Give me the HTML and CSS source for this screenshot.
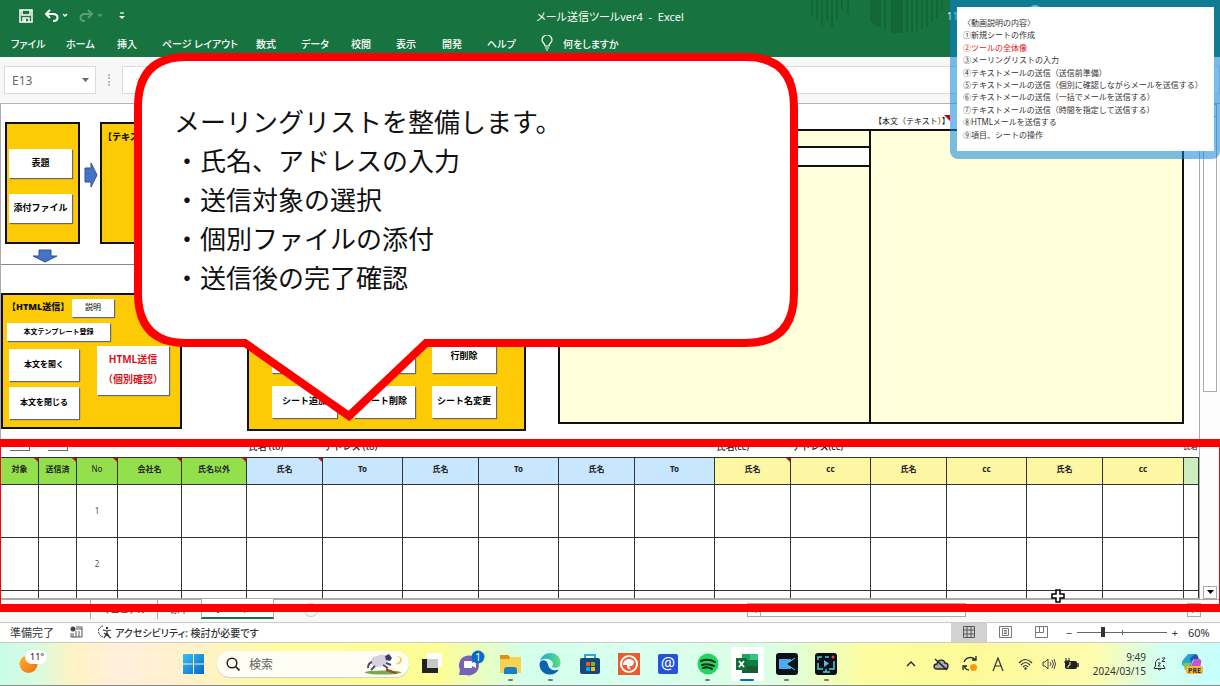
FILE: index.html
```html
<!DOCTYPE html>
<html lang="ja">
<head>
<meta charset="utf-8">
<title>メール送信ツールver4 - Excel</title>
<link rel="stylesheet" href="styles.css">
</head>
<body>
<div class="screen">
  <header class="ribbon">
    <svg class="ribbon-art" viewBox="0 0 140 36" aria-hidden="true">
      <path d="M2 0v15M7 0v19M12 0v26M17 0v22M22 0v28M27 0v19M32 0v10M38 0v15" stroke-width="2"/>
      <path d="M60 0h11v28l-11-7zM81 0h12v33h-12z" class="solid"/>
      <path d="M75 0v30M97 0v33M102 0v32M107 0v31M112 0v28M117 0v26M122 0v22M127 0v18M132 0v10" stroke-width="2"/>
    </svg>
    <div class="titlebar">
      <div class="quick">
        <button aria-label="上書き保存"><svg width="14" height="14" viewBox="0 0 14 14"><path d="M1 1h12v12H1zM3 1v5h8V1M4 13V9h6v4" fill="none" stroke="#fff" stroke-width="1.500"/><path d="M5 10h2v3H5z" fill="#fff"/></svg></button>
        <button aria-label="元に戻す"><svg width="24" height="14" viewBox="0 0 24 14"><path d="M6 1 2 5l4 4M2 5h7c6 0 6 7 0 7" fill="none" stroke="#fff" stroke-width="2"/><path d="m19 5 2 2 2-2" fill="none" stroke="#fff" stroke-width="1.5"/></svg></button>
        <button class="dim" aria-label="やり直し"><svg width="24" height="14" viewBox="0 0 24 14"><path d="m9 1 4 4-4 4M13 5H6c-6 0-6 7 0 7" fill="none" stroke="#fff" stroke-width="2"/><path d="m19 5 2 2 2-2" fill="none" stroke="#fff" stroke-width="1.5"/></svg></button>
        <button aria-label="ユーザー設定"><svg width="8" height="10" viewBox="0 0 8 10"><path d="M2 2h4" stroke="#fff" stroke-width="1.200"/><path d="M1 5h6L4 8z" fill="#fff"/></svg></button>
      </div>
      <div class="doc-title">メール送信ツールver4&nbsp; -&nbsp; Excel</div>
      <div class="user">11<i class="avatar"></i></div>
    </div>
    <nav class="tabs">
      <button>ファイル</button><button>ホーム</button><button>挿入</button><button>ページ レイアウト</button><button>数式</button><button>データ</button><button>校閲</button><button>表示</button><button>開発</button><button>ヘルプ</button>
      <svg width="12" height="16" viewBox="0 0 12 16" aria-hidden="true"><path d="M4 11c0-3-3-3-3-6a5 5 0 0 1 10 0c0 3-3 3-3 6zM4 13h4M5 15h2" fill="none" stroke="#fff" stroke-width="1.2"/></svg>
      <button>何をしますか</button>
    </nav>
  </header>

  <div class="formula-bar">
    <div class="namebox"><input aria-label="名前ボックス" value="E13"><svg width="7" height="5" viewBox="0 0 7 5" aria-hidden="true"><path d="M0 0h7L3.500 4z" fill="#666"/></svg></div>
    <span class="grip" aria-hidden="true"></span>
    <div class="fx"><span aria-hidden="true">×</span><input aria-label="数式バー"></div>
  </div>

  <main class="workbook">
    <div class="sheet">
      <div class="canvas">
        <div class="divider"></div>
        <section class="shape box-file"><button>表題</button><button>添付ファイル</button></section>
        <svg class="arrow-r" viewBox="0 0 14 28" aria-hidden="true"><path d="M1 7h6V2l6 12-6 12v-5H1z" fill="#4472c4" stroke="#2f528f"/></svg>
        <section class="shape box-text"><b>【テキスト送信】</b></section>
        <svg class="arrow-d" viewBox="0 0 26 14" aria-hidden="true"><path d="M7 1h12v6h6l-12 6L1 7h6z" fill="#4472c4" stroke="#2f528f"/></svg>
        <section class="shape box-html">
          <div class="line"><b>【HTML送信】</b><button class="plain">説明</button></div>
          <button class="template">本文テンプレート登録</button>
          <div class="split">
            <div class="stack"><button>本文を開く</button><button>本文を閉じる</button></div>
            <button class="send">HTML送信<br>（個別確認）</button>
          </div>
        </section>
        <section class="shape box-ops">
          <button>行追加</button><button>行挿入</button><button>行削除</button>
          <button>シート追加</button><button>シート削除</button><button>シート名変更</button>
        </section>
        <div class="body-label">【本文（テキスト）】<i class="note"></i></div>
        <section class="mail-area">
          <div class="mail-left"><div></div><div class="white"></div><div></div></div>
          <div class="mail-right"></div>
        </section>
      </div>

      <table class="list">
        <colgroup><col class="w38"><col class="w38"><col class="w41"><col class="w64"><col class="w65"><col class="w76"><col class="w80"><col class="w76"><col class="w80"><col class="w76"><col class="w80"><col class="w76"><col class="w80"><col class="w76"><col class="w80"><col class="w76"><col class="w81"><col></colgroup>
        <tbody>
          <tr class="caps"><td><i class="stub"></i></td><td><i class="stub"></i></td><td></td><td></td><td></td><td>氏名 (to)</td><td>アドレス (to)</td><td></td><td></td><td></td><td></td><td>氏名(cc)</td><td>アドレス(cc)</td><td></td><td></td><td></td><td></td><td class="last">氏名</td></tr>
          <tr class="head"><th class="g n">対象</th><th class="g n">送信済</th><th class="g n thin">No</th><th class="g n">会社名</th><th class="g n">氏名以外</th><th class="b n">氏名</th><th class="b">To</th><th class="b">氏名</th><th class="b">To</th><th class="b">氏名</th><th class="b">To</th><th class="y n">氏名</th><th class="y">cc</th><th class="y">氏名</th><th class="y">cc</th><th class="y">氏名</th><th class="y">cc</th><th class="m"></th></tr>
          <tr class="row"><td></td><td></td><td>1</td><td></td><td></td><td></td><td></td><td></td><td></td><td></td><td></td><td></td><td></td><td></td><td></td><td></td><td></td><td></td></tr>
          <tr class="row"><td></td><td></td><td>2</td><td></td><td></td><td></td><td></td><td></td><td></td><td></td><td></td><td></td><td></td><td></td><td></td><td></td><td></td><td></td></tr>
          <tr class="cut"><td></td><td></td><td></td><td></td><td></td><td></td><td></td><td></td><td></td><td></td><td></td><td></td><td></td><td></td><td></td><td></td><td></td><td></td></tr>
        </tbody>
      </table>
    </div>
    <div class="vscroll">
      <span class="sbtn"></span>
      <span class="thumb"></span>
      <button class="sbtn down" aria-label="下へ"><svg width="7" height="5" viewBox="0 0 7 5"><path d="M0 0h7L3.500 4z" fill="#000"/></svg></button>
    </div>
  </main>

  <div class="sheetbar">
    <span class="lead"></span><button>マニュアル</button><button class="t2">原本</button><button class="active">グループ１</button>
    <span class="rest"><span class="plus">+</span></span>
    <span class="hscroll"><span class="hb">◂</span><span class="hthumb"></span><span class="hgap"></span><span class="hb">▸</span></span>
  </div>

  <footer class="status">
    <span>準備完了</span>
    <svg class="macro" width="13" height="12" viewBox="0 0 13 12" aria-hidden="true"><circle cx="3" cy="3" r="2.500" fill="#444"/><path d="M6 1h6v10H1V7M3 11V7M6 11V5M9 11V5M6 3h6" fill="none" stroke="#555"/></svg>
    <svg width="16" height="14" viewBox="0 0 16 14" aria-hidden="true"><path d="M6 1C0 2 0 10 6 12" fill="none" stroke="#444" stroke-dasharray="3 1"/><path d="M6 5l4 1 4-1M10 6v2l-3 5M10 8l3 5M7 8l7 5" fill="none" stroke="#333" stroke-width="1.200"/><circle cx="10" cy="3" r="1.200" fill="#333"/></svg>
    <b class="acc">アクセシビリティ: 検討が必要です</b>
    <div class="views">
      <button class="on" aria-label="標準"><svg width="12" height="12" viewBox="0 0 12 12"><path d="M.5.5h11v11H.5zM.5 4h11M.5 8h11M4 .5v11M8 .5v11" fill="none" stroke="#555"/></svg></button>
      <button aria-label="ページレイアウト"><svg width="13" height="12" viewBox="0 0 13 12"><path d="M.5.5h12v11H.5zM3.500 2.500h6v7h-6zM5 4.500h3M5 6h3M5 7.500h3" fill="none" stroke="#777"/></svg></button>
      <button aria-label="改ページ"><svg width="13" height="12" viewBox="0 0 13 12"><path d="M.5.5h12v11H.5zM4.500.5v6h4v-6M.5 6.500h4" fill="none" stroke="#777"/></svg></button>
    </div>
    <div class="zoom"><button aria-label="縮小">−</button><input type="range" min="0" max="100" value="28" aria-label="ズーム"><button aria-label="拡大">+</button><span>60%</span></div>
  </footer>

  <footer class="taskbar">
    <div class="weather"><svg width="28" height="26" viewBox="0 0 28 26" aria-hidden="true"><defs><linearGradient id="sun" x2="1" y2="1"><stop stop-color="#ffb52e"/><stop offset="1" stop-color="#ee6d12"/></linearGradient></defs><circle cx="9.500" cy="13" r="9" fill="url(#sun)"/></svg><span>11°</span></div>
    <button class="start" aria-label="スタート"><svg width="22" height="22" viewBox="0 0 22 22"><defs><linearGradient id="win" x2="1" y2="1"><stop stop-color="#35c0f5"/><stop offset="1" stop-color="#0468c8"/></linearGradient></defs><path d="M0 1h10v9.500H0zM11 1h10v9.500H11zM0 11.500h10V21H0zM11 11.500h10V21H11z" fill="url(#win)"/></svg></button>
    <label class="search"><svg width="14" height="14" viewBox="0 0 14 14" aria-hidden="true"><circle cx="6" cy="6" r="4.800" fill="none" stroke="#222" stroke-width="1.500"/><path d="m9.500 9.500 4 4" stroke="#222" stroke-width="1.600"/></svg><input placeholder="検索" aria-label="検索">
      <svg width="42" height="22" viewBox="0 0 42 22" aria-hidden="true"><ellipse cx="20" cy="19.500" rx="18" ry="2" fill="#78a94d"/><path d="M23 15l12 5-3 1-9-3z" fill="#9a4f20"/><path d="M8 8c0-4 4-5 7-5 4-3 8-1 9 2 2 4-1 8-5 8-4 2-10 2-11-5z" fill="#d8d0da"/><path d="M9 9c-3 1-4 3-4 6M12 13l-4 4M20 12l5 3M23 10l5 2" stroke="#484d75" stroke-width="2" fill="none"/><path d="m22 3 4-2 3 4-2 3-4-1z" fill="#383c68"/><path d="M33 3c6 1 5 7-1 8 8 2 10-8 1-8z" fill="#f0c858"/></svg>
    </label>
    <div class="apps">
      <button aria-label="タスクビュー"><svg width="22" height="22" viewBox="0 0 22 22"><path d="M6 0h15v14H6z" fill="#fff"/><path d="M1 6h5v9h11v5H1z" fill="#222"/><path d="M6 6h11v9H6z" fill="#c8c8cc"/></svg></button>
      <button aria-label="チャット"><svg width="28" height="28" viewBox="0 0 28 28"><path d="M2 25l1-5a10 10 0 1 1 6 5z" fill="#7862b5"/><rect x="7" y="11" width="8" height="7" rx="1" fill="#fff"/><path d="m15 13 4-2v7l-4-2z" fill="#fff"/><circle cx="21" cy="7" r="6.500" fill="#0869c8"/><text x="21" y="11" class="badge">1</text></svg></button>
      <button class="run" aria-label="エクスプローラー"><svg width="22" height="22" viewBox="0 0 22 22"><path d="M0 2h8l2 2v4H0z" fill="#dc920d"/><path d="M0 6h9l2-2h10v16H0z" fill="#fbd151"/><path d="M4 17q0-3 3-3h7q3 0 3 3v4H4z" fill="#1780c9"/></svg></button>
      <button class="run" aria-label="Edge"><svg width="22" height="22" viewBox="0 0 22 22"><defs><linearGradient id="edge" x2="1"><stop stop-color="#16a8dd"/><stop offset="1" stop-color="#62dc79"/></linearGradient></defs><path d="M1 9c-2 6 3 13 10 12.500 4 0 7-2 9-5-5 2-10 0-11-5C8 7 4 6 1 9z" fill="#0c62b0"/><path d="M1 9C3-3 20-3 21.500 9c.5 6-6 7-9 4.500 3-2 1-6-2-7C6 5 2 6 1 9z" fill="url(#edge)"/></svg></button>
      <button aria-label="ストア"><svg width="22" height="22" viewBox="0 0 22 22"><path d="M6 6V2h10v4" fill="none" stroke="#34a8d7" stroke-width="2"/><rect x="1" y="5" width="20" height="16" rx="2" fill="#17477b"/><path d="M7 9h4v4H7z" fill="#f35325"/><path d="M12 9h4v4h-4z" fill="#81bc06"/><path d="M7 14h4v4H7z" fill="#05a6f0"/><path d="M12 14h4v4h-4z" fill="#ffba08"/></svg></button>
      <button aria-label="ブラウザー"><svg width="22" height="22" viewBox="0 0 22 22"><path d="M0 0h22v22H0z" fill="#eb5b2c"/><circle cx="11" cy="11" r="8" fill="none" stroke="#fff" stroke-width="2"/><path d="M5 12c0-6 7-8 11-4 0 4-2 6-5 5l2 4-4-2 0-3z" fill="#fff"/></svg></button>
      <button aria-label="メール"><svg width="22" height="22" viewBox="0 0 22 22"><rect x="1" y="1" width="20" height="20" rx="2" fill="#2452d8"/><text x="11" y="16" class="at">@</text></svg></button>
      <button class="run" aria-label="Spotify"><svg width="22" height="22" viewBox="0 0 22 22"><circle cx="11" cy="11" r="10.500" fill="#21d665"/><path d="M4 8q7-3 14 1M5 12q6-2 12 1M6 15q5-2 9 1" fill="none" stroke="#102b18" stroke-width="2" stroke-linecap="round"/></svg></button>
      <button class="run current" aria-label="Excel"><svg width="22" height="22" viewBox="0 0 22 22"><path d="M6 1h8v6H6z" fill="#21a366"/><path d="M14 1h8v6h-8z" fill="#33c481"/><path d="M6 7h16v6H6z" fill="#107c41"/><path d="M6 13h16v7H6z" fill="#185c37"/><path d="M0 5h11v12H0z" fill="#10703c"/><path d="m3 8 5 6M8 8l-5 6" stroke="#fff" stroke-width="1.800"/></svg></button>
      <button class="run" aria-label="動画編集"><svg width="22" height="22" viewBox="0 0 22 22"><rect width="22" height="22" rx="3" fill="#0b1117"/><path d="M3 6h12v10H3z" fill="#4ca9ef"/><path d="M10 11l9-6v12z" fill="#101820"/><path d="m19 5-9 6 9 6" fill="none" stroke="#55d9f2"/></svg></button>
      <button class="run" aria-label="画面録画"><svg width="22" height="22" viewBox="0 0 22 22"><rect width="22" height="22" rx="3" fill="#0b1117"/><path d="M3 7V4h4M10 4h4M3 10v6h5M19 8v8h-5M8 19h7M11 16v3" fill="none" stroke="#54c9df" stroke-width="1.500"/><path d="m9 7 5 3.500L9 14z" fill="#58b6ea"/><circle cx="18" cy="4" r="1.500" fill="#e34b4b"/></svg></button>
    </div>
    <div class="tray">
      <svg width="10" height="6" viewBox="0 0 10 6"><path d="m1 5 4-4 4 4" fill="none" stroke="#222" stroke-width="1.300"/></svg>
      <svg width="16" height="13" viewBox="0 0 16 13"><path d="M4 11C0 11 0 6 4 6c1-5 7-5 8-1 4 0 4 6 0 6z" fill="#aaa" stroke="#222" stroke-width="1.300"/><path d="m2 1 12 11" stroke="#222" stroke-width="1.500"/></svg>
      <svg width="16" height="16" viewBox="0 0 16 16"><path d="M2 6c2-5 8-6 12-2M14 0v4h-4M7 14c-2 0-4-2-5-4M1 14v-4h4" fill="none" stroke="#222" stroke-width="1.300"/><circle cx="11.500" cy="11.500" r="3.500" fill="#f49a16"/></svg>
      <svg width="12" height="15" viewBox="0 0 12 15"><path d="M1 14 6 1l5 13M3 9h6" fill="none" stroke="#333" stroke-width="1.200"/></svg>
      <svg width="15" height="12" viewBox="0 0 15 12"><path d="M1 5q6.500-7 13 0M3 7q4.500-5 9 0M5 9q2.500-3 5 0" fill="none" stroke="#333" stroke-width="1.200"/><circle cx="7.500" cy="10.500" r="1.200" fill="#333"/></svg>
      <svg width="14" height="12" viewBox="0 0 14 12"><path d="M1 4h2l3-3v10L3 8H1zM8 4q2 2 0 4M10 2q3 4 0 8M12 1q3 5 0 10" fill="none" stroke="#444"/></svg>
      <svg width="15" height="12" viewBox="0 0 15 12"><rect x="1.500" y="3.500" width="11" height="7" rx="1" fill="#222" stroke="#222"/><path d="M14 5v4" stroke="#222" stroke-width="1.500"/><path d="M2 0v3M5 0v3M1 3h5v2L4 7 1 5z" fill="#222" stroke="#222"/><path d="M6 4v3L4 8v2" stroke="#fdfca8" fill="none"/></svg>
      <div class="clock">9:49<br>2024/03/15</div>
      <svg width="14" height="15" viewBox="0 0 14 15"><path d="M7 2C4 2 2.500 4 2.500 6v3L1 11.500h11L10.500 9V8M5 12q1.500 2 3 0M9 1h3L9 4.500h3M5 6h2.500L5 9h2.500" fill="none" stroke="#333"/></svg>
      <svg width="22" height="22" viewBox="0 0 22 22"><path d="M7 1h7l-4 12H3C0 13 1 8 2 7z" fill="#25a6d2"/><path d="M14 1c3 0 3 3 4 5h-5l-3 3-1-4z" fill="#2455bd"/><path d="M13 6h5c4 0 2 6 0 10h-9z" fill="#c557c7"/><path d="M2 10h8l-3 7H4z" fill="#8bc34a"/><rect x="5" y="13" width="17" height="8" rx="2" fill="#f5b83d"/><text x="13.500" y="19.500" class="pre">PRE</text></svg>
    </div>
  </footer>

  <div class="highlight"></div>

  <aside class="callout">
    <svg viewBox="0 0 664 370" aria-hidden="true"><path d="M52 4H612Q660 4 660 54V240Q660 290 612 290H292L215 363L111 290H52Q4 290 4 240V54Q4 4 52 4Z" fill="#fff" stroke="#f00" stroke-width="8"/></svg>
    <p>メーリングリストを整備します。</p><p>・氏名、アドレスの入力</p><p>・送信対象の選択</p><p>・個別ファイルの添付</p><p>・送信後の完了確認</p>
  </aside>

  <aside class="toc">
    <ul>
      <li>〈動画説明の内容〉</li><li>①新規シートの作成</li><li class="now">②ツールの全体像</li><li>③メーリングリストの入力</li><li>④テキストメールの送信（送信前準備）</li><li>⑤テキストメールの送信（個別に確認しながらメールを送信する）</li><li>⑥テキストメールの送信（一括でメールを送信する）</li><li>⑦テキストメールの送信（時間を指定して送信する）</li><li>⑧HTMLメールを送信する</li><li>⑨項目、シートの操作</li>
    </ul>
  </aside>

  <svg class="cursor" viewBox="0 0 14 14" aria-hidden="true"><path d="M5 1h4v4h4v4H9v4H5V9H1V5h4z" fill="#fff" stroke="#000" stroke-width="1.500"/></svg>
</div>
</body>
</html>
```

FILE: styles.css
```css
* { box-sizing: border-box; }
body { margin: 0; font-family: "Noto Sans", "Noto Sans CJK JP", sans-serif; color: #111; }
button, input { font: inherit; color: inherit; border: 0; background: none; padding: 0; margin: 0; }
i { font-style: normal; }
svg { display: block; flex: none; }

.screen { position: relative; min-height: 100vh; display: flex; flex-direction: column; overflow: hidden; background: #fff; }

/* Ribbon */
.ribbon { position: relative; height: 57px; background: #17733f; color: #fff; font-size: 10px; font-feature-settings: "palt"; }
.ribbon-art { position: absolute; right: 270px; top: 0; width: 140px; height: 36px; fill: none; stroke: #126637; }
.ribbon-art .solid { fill: #126637; stroke: none; }
.titlebar { position: relative; display: grid; grid-template-columns: 1fr auto 1fr; height: 31px; align-items: center; }
.doc-title { font-size: 11px; }
.quick { display: flex; align-items: center; gap: 11px; padding-left: 19px; }
.quick button:last-child { margin-left: 4px; }
.quick .dim { opacity: .3; }
.user { justify-self: end; display: flex; width: 273px; }
.avatar { width: 14px; height: 14px; margin-left: 70px; margin-top: -4px; border-radius: 50%; background: #e8f2f6; }
.tabs { position: relative; display: grid; grid-template-columns: 55px 51px 45px 94px 45px 50px 45px 46px 45px 54px 22px auto; justify-content: start; align-items: center; height: 24px; padding-left: 11px; font-weight: 500; }
.tabs button { justify-self: start; white-space: nowrap; }

/* Formula bar */
.formula-bar { display: flex; height: 47px; padding: 9px 0 9px 4px; background: #f7f7f7; border-bottom: 1px solid #b4b4b4; font-size: 12px; color: #666; }
.namebox { display: flex; align-items: center; width: 92px; padding: 0 6px 0 7px; background: #fff; border: 1px solid #dcdcdc; }
.namebox input { flex: 1; min-width: 0; }
.grip { width: 2px; margin: 8px 12px; border-left: 2px dotted #bbb; }
.fx { flex: 1; display: flex; gap: 8px; padding-left: 12px; align-items: center; background: #fff; border: 1px solid #dcdcdc; color: #ccc; }
.fx input { flex: 1; }

/* Worksheet */
.workbook { display: flex; flex: 1; min-height: 495px; }
.sheet { flex: 1; min-width: 0; border-right: 1px solid #aaa; }
.canvas { position: relative; height: 337px; border-left: 1px solid #aaa; }
.divider { position: absolute; top: 160px; left: 0; width: 200px; border-top: 1px solid #888; }
.shape { position: absolute; background: #fdcb05; border: 2px solid #111; font-size: 9px; font-weight: 700; }
.shape button { padding-bottom: 3px; background: #fff; box-shadow: 1px 1px 1px #666; font-weight: 700; white-space: nowrap; color: #000; }
.box-file { left: 4px; top: 18px; width: 75px; height: 122px; padding: 25px 6px 0 2px; display: flex; flex-direction: column; gap: 16px; }
.box-file button { height: 29px; }
.box-text { left: 99px; top: 18px; width: 240px; height: 122px; padding: 6px 1px; }
.arrow-r { position: absolute; left: 83px; top: 57px; width: 14px; height: 28px; }
.arrow-d { position: absolute; left: 31px; top: 145px; width: 26px; height: 14px; }
.box-html { left: 0; top: 189px; width: 181px; height: 136px; padding: 4px; display: flex; flex-direction: column; align-items: flex-start; }
.box-html .line { display: flex; align-items: center; margin-bottom: 6px; }
.box-html .plain { width: 42px; height: 18px; font-size: 8px; font-weight: 400; }
.box-html .line b { width: 65px; padding-bottom: 4px; white-space: nowrap; }
.box-html .template { width: 103px; height: 18px; font-size: 7px; }
.split { display: flex; gap: 18px; padding: 5px 0 0 2px; font-size: 8px; }
.stack { display: flex; flex-direction: column; gap: 6px; padding-top: 3px; }
.stack button { width: 70px; height: 32px; }
.shape .send { width: 72px; height: 49px; font-size: 10px; line-height: 20px; color: #d8141c; }
.box-ops { left: 246px; top: 160px; width: 279px; height: 167px; padding: 0 0 11px 23px; display: grid; grid-template-columns: 65px 61px 64px; grid-template-rows: 32px 32px; gap: 13px 17px; align-content: end; }
.body-label { position: absolute; left: 873px; top: 11px; font-size: 8px; line-height: 12px; }
.note { position: absolute; right: 0; top: 0; border: 3px solid #c00; border-left-color: transparent; border-bottom-color: transparent; }
.mail-area { position: absolute; left: 557px; right: 15px; top: 25px; height: 295px; display: grid; grid-template-columns: 1fr 1fr; border: 2px solid #111; background: #ffffdc; }
.mail-left { display: grid; grid-template-rows: 15px 21px 1fr; border-right: 2px solid #111; }
.mail-left .white { background: #fff; border: solid #111; border-width: 2px 0; }

/* Mailing list */
.list { width: 100%; table-layout: fixed; border-collapse: collapse; font-size: 8px; line-height: 12px; text-align: center; }
.w38 { width: 38px; } .w41 { width: 41px; } .w64 { width: 64px; } .w65 { width: 65px; }
.w76 { width: 76px; } .w80 { width: 80px; } .w81 { width: 81px; }
.list td, .list th { padding: 0; border: 1px solid #333; }
.list .caps td { height: 16px; border-width: 0; vertical-align: top; text-align: left; white-space: nowrap; font-size: 9px; font-weight: 500; padding-left: 2px; }
.list .caps .last { padding-left: 0; font-size: 7px; }
.stub { display: block; width: 20px; height: 10px; margin-left: 7px; border: solid #666; border-width: 0 1px 1px 0; }
.list .head th { position: relative; height: 27px; padding-bottom: 3px; white-space: nowrap; color: #222; }
.head .thin { font-weight: 400; }
.g { background: #94df4c; } .b { background: #c8e6fd; } .y { background: #fdf6a2; } .m { background: #cceebd; }
.n::after { content: ""; position: absolute; right: 0; top: 0; border: 2px solid #c41010; border-left-color: transparent; border-bottom-color: transparent; }
.row td { height: 53px; color: #555; }
.cut td { height: 8px; border-bottom-color: #aaa; }

.vscroll { width: 20px; padding: 0 3px; display: flex; flex-direction: column; background: #fdfdfd; }
.sbtn { height: 13px; display: flex; align-items: center; justify-content: center; border: 1px solid #ababab; }
.thumb { height: 275px; border: 1px solid #ababab; border-top: 0; background: #fff; }
.down { margin-top: auto; background: #fff; }

/* Sheet tabs */
.sheetbar { display: flex; height: 24px; background: #f9f7f8; border-bottom: 1px solid #ccc; font-size: 9px; font-weight: 500; color: #555; }
.sheetbar > * { border-top: 1px solid #aaa; }
.sheetbar .lead { width: 90px; }
.sheetbar button { height: 20px; width: 67px; border-left: 1px solid #aaa; }
.sheetbar .t2 { width: 44px; }
.sheetbar .active { width: 73px; background: #fff; border: solid #aaa; border-width: 0 1px 2px; border-bottom-color: #17733f; color: #17733f; font-weight: 700; }
.rest { flex: 1; padding: 3px 30px; }
.plus { display: block; width: 14px; height: 14px; border: 1px solid #ccc; border-radius: 50%; text-align: center; line-height: 12px; color: #bbb; }
.hscroll { width: 473px; display: flex; align-items: flex-start; padding-top: 3px; padding-right: 19px; }
.hb { width: 14px; height: 14px; line-height: 12px; text-align: center; border: 1px solid #aaa; }
.hthumb { width: 205px; height: 14px; background: #fff; border: 1px solid #aaa; border-left: 0; }
.hgap { flex: 1; }

/* Status bar */
.status { display: flex; align-items: center; height: 20px; padding: 0 0 1px 10px; border-bottom: 1px solid #ccc; font-size: 11px; color: #333; }
.macro { margin: 0 14px 0 16px; }
.acc { margin-left: 2px; font-size: 10px; font-weight: 500; font-feature-settings: "palt"; }
.views { display: flex; margin-left: auto; height: 19px; }
.views button { width: 36px; display: flex; align-items: center; justify-content: center; }
.views .on { background: #d2d2d2; }
.zoom { display: flex; align-items: center; width: 161px; padding-left: 4px; }
.zoom button { width: 12px; }
.zoom span { margin-left: 7px; }
.zoom input { width: 90px; height: 12px; margin: 0 2px; appearance: none; background: linear-gradient(#666, #666) 50% 50% / 1px 5px no-repeat, linear-gradient(#666, #666) 0 50% / 100% 1px no-repeat; }
.zoom input::-webkit-slider-thumb { appearance: none; width: 4px; height: 10px; background: #333; }

/* Taskbar */
.taskbar { display: flex; align-items: center; height: 43px; padding-left: 19px; border-bottom: 1px solid #888; background: linear-gradient(90deg, #c8fde8 0, #d8fbe0 3%, #fff3c4 6%, #ffefdc 10%, #fff3c4 17%, #fdfd9c 23%, #fdfd94 36%, #d4ffea 43%, #d8fff0 53%, #dcffe0 64%, #fdfda0 71%, #fcfa98 80%, #fdfcb0 90%, #d4fff0 95%, #c6fffc 100%); }
.weather { position: relative; width: 164px; }
.weather span { position: absolute; left: 6px; top: -1px; padding: 0 3px 0 5px; border-radius: 7px; background: #fff; font-size: 9px; line-height: 14px; }
.search { display: flex; align-items: center; width: 192px; height: 26px; margin-left: 12px; padding: 0 4px 0 9px; border-radius: 13px; background: #fffef4; font-size: 12px; color: #555; box-shadow: 0 1px 1px #ccc; }
.search input { flex: 1; min-width: 0; margin-left: 9px; }
.search input::placeholder { color: #666; }
.apps { display: flex; width: 434px; height: 42px; margin-left: 3px; }
.apps button { position: relative; flex: 1; display: flex; align-items: center; justify-content: center; }
.run::after { content: ""; position: absolute; bottom: 4px; width: 5px; height: 2px; border-radius: 1px; background: #777; }
.apps .current { background: linear-gradient(#fff, #fff) 50% 50% / 33px 34px no-repeat; }
.current::after { width: 14px; background: #0869b8; }
.badge { fill: #fff; font-size: 10px; text-anchor: middle; }
.at { fill: #fff; font-size: 16px; text-anchor: middle; }
.pre { fill: #333; font-size: 7px; font-weight: 700; text-anchor: middle; }
.tray { display: grid; grid-template-columns: 30px 30px 28px 28px 26px 22px 22px 64px 28px 36px; justify-items: center; align-items: center; margin-left: auto; padding-right: 10px; }
.clock { justify-self: end; font-size: 10px; line-height: 14px; text-align: right; color: #333; }

/* Overlays */
.highlight { position: absolute; left: 0; right: 0; top: 439px; height: 173px; border: solid #f00; border-width: 8px 1px; }
.callout { position: absolute; left: 134px; top: 53px; width: 664px; height: 370px; padding: 50px 40px; font-size: 26px; line-height: 39px; color: #111; }
.callout svg { position: absolute; inset: 0; width: 664px; height: 370px; }
.callout p { position: relative; margin: 0; }
.toc { position: absolute; right: 0; top: 0; width: 270px; height: 159px; padding: 7px 6px 8px 7px; border-radius: 0 0 8px 8px; background: rgba(12, 131, 220, .54); }
.toc ul { display: flex; flex-direction: column; height: 144px; margin: 0; padding: 10px 6px; list-style: none; background: #fff; font-size: 8px; color: #333; }
.toc li { flex: 1; line-height: 12px; white-space: nowrap; }
.toc .now { color: #d22; }
.cursor { position: absolute; left: 1051px; top: 589px; width: 14px; height: 14px; }
```
